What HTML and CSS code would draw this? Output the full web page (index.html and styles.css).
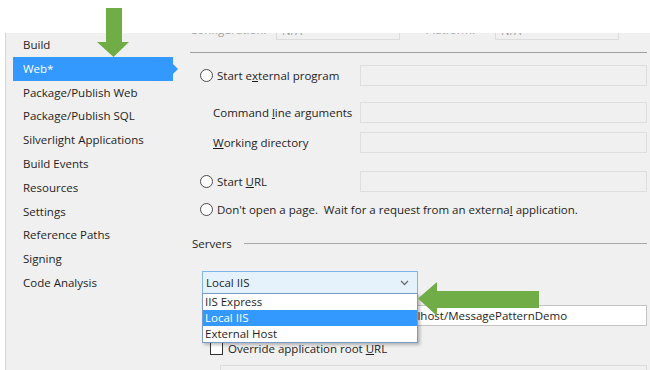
FILE: index.html
```html
<!DOCTYPE html>
<html lang="en">
<head>
    <meta charset="UTF-8">
    <title>Project Properties - Web</title>
    <link rel="stylesheet" href="styles.css">
</head>
<body>
    <div class="page">
        <div class="topbar"></div>
        <div class="window">
            <ul class="nav">
                <li>Build</li>
                <li class="active">Web*</li>
                <li>Package/Publish Web</li>
                <li>Package/Publish SQL</li>
                <li>Silverlight Applications</li>
                <li>Build Events</li>
                <li>Resources</li>
                <li>Settings</li>
                <li>Reference Paths</li>
                <li>Signing</li>
                <li>Code Analysis</li>
            </ul>

            <div class="content">
                <div class="config-row">
                    <span class="config-label">Configuration:</span>
                    <span class="config-box">N/A</span>
                    <span class="config-label platform">Platform:</span>
                    <span class="config-box">N/A</span>
                </div>
                <div class="sep"></div>

                <div class="row row-ext">
                    <label class="label radio-label"><span class="radio"></span><span>Start e<u>x</u>ternal program</span></label>
                    <span class="field"></span>
                </div>
                <div class="row row-args">
                    <label class="label sub"><span>Command <u>l</u>ine arguments</span></label>
                    <span class="field"></span>
                </div>
                <div class="row row-dir">
                    <label class="label sub"><span><u>W</u>orking directory</span></label>
                    <span class="field"></span>
                </div>
                <div class="row row-url">
                    <label class="label radio-label"><span class="radio"></span><span>Start <u>U</u>RL</span></label>
                    <span class="field"></span>
                </div>
                <div class="row row-none">
                    <label class="label radio-label wide"><span class="radio"></span><span>Don't open a page.&nbsp; Wait for a request from an externa<u>l</u> application.</span></label>
                </div>

                <div class="group-title">
                    <span>Servers</span>
                    <span class="group-line"></span>
                </div>

                <div class="server">
                    <div class="select">
                        <span>Local IIS</span>
                        <svg class="chevron" width="9" height="6" viewBox="0 0 9 6"><path d="M1 1l3.5 3.5L8 1" fill="none" stroke="#6d6d6d" stroke-width="1.3"/></svg>
                    </div>
                    <ul class="options">
                        <li>IIS Express</li>
                        <li class="selected">Local IIS</li>
                        <li>External Host</li>
                    </ul>
                </div>

                <div class="row row-project">
                    <label class="label sub"><span>Project Url</span></label>
                    <span class="field white">http://localhost/MessagePatternDemo</span>
                </div>

                <div class="check-row">
                    <span class="checkbox"></span>
                    <span>Override application root <u>U</u>RL</span>
                </div>

                <div class="bottom-box"></div>
            </div>
        </div>

        <svg class="arrow arrow-down" width="34" height="52" viewBox="0 0 34 52">
            <polygon points="10,1 26,1 26,35 33,35 17.5,50 1,35 10,35" fill="#70ad47"/>
        </svg>
        <svg class="arrow arrow-left" width="124" height="37" viewBox="0 0 124 37">
            <polygon points="1,17.5 20,1 20,10 122,10 122,27 20,27 20,35" fill="#70ad47"/>
        </svg>
    </div>
</body>
</html>
```

FILE: styles.css
```css
body {
    margin: 0;
    background: #ffffff;
    font-family: "Open Sans", "Noto Sans", sans-serif;
    font-size: 11.5px;
    color: #1e1e1e;
}
.page {
    position: relative;
    width: 650px;
    height: 370px;
    overflow: hidden;
}
.topbar {
    height: 33px;
    background: #ffffff;
}
.window {
    display: flex;
    height: 337px;
    margin-left: 5px;
    border-left: 1px solid #d6d6d6;
    background: #f0f0f0;
    overflow: hidden;
}
.nav {
    list-style: none;
    margin: 0;
    padding: 0;
    width: 175px;
    flex-shrink: 0;
}
.nav li {
    position: relative;
    height: 23.8px;
    line-height: 23.8px;
    margin-left: 7px;
    width: 160px;
    padding-left: 10px;
    box-sizing: border-box;
    white-space: nowrap;
}
.nav li.active {
    background: #3399ff;
    color: #ffffff;
}
.nav li.active::after {
    content: "";
    position: absolute;
    right: -5px;
    top: 7px;
    border-top: 5px solid transparent;
    border-bottom: 5px solid transparent;
    border-left: 5px solid #3399ff;
}
.content {
    flex: 1;
    padding: 0 3px 0 9px;
    min-width: 0;
}
.config-row {
    display: flex;
    align-items: center;
    height: 21px;
    margin-top: -14px;
    color: #a3a3a3;
}
.config-label {
    width: 86px;
}
.config-label.platform {
    width: 55px;
    margin-left: 20px;
    text-align: right;
    padding-right: 20px;
}
.config-box {
    width: 124px;
    height: 21px;
    line-height: 21px;
    padding-left: 5px;
    box-sizing: border-box;
    border: 1px solid #dcdcdc;
}
.sep {
    height: 1px;
    margin-top: 12px;
    background: #a0a0a0;
}
.row {
    display: flex;
    align-items: center;
    height: 21px;
}
.row-ext { margin-top: 12px; }
.row-args { margin-top: 16px; }
.row-dir { margin-top: 9px; }
.row-url { margin-top: 18px; }
.row-none { margin-top: 7px; }
.row-project { margin-top: 11px; }
.label {
    width: 170px;
    flex-shrink: 0;
    box-sizing: border-box;
    display: flex;
    align-items: center;
    white-space: nowrap;
}
.radio-label {
    padding-left: 10px;
}
.label.wide {
    width: auto;
}
.sub {
    padding-left: 23px;
}
.radio {
    width: 11px;
    height: 11px;
    border: 1px solid #4a4a4a;
    border-radius: 50%;
    background: #ffffff;
    margin-right: 4px;
}
.field {
    flex: 1;
    height: 21px;
    line-height: 19px;
    box-sizing: border-box;
    border: 1px solid #dedede;
    padding-left: 3px;
    white-space: nowrap;
}
.field.white {
    background: #ffffff;
    border-color: #c4c4c4;
    padding-left: 1px;
}
.group-title {
    display: flex;
    align-items: center;
    height: 16px;
    margin-top: 15px;
    padding-left: 2px;
}
.group-line {
    flex: 1;
    height: 1px;
    margin-left: 12px;
    background: #a8a8a8;
}
.server {
    position: relative;
    margin: 20px 0 0 12px;
    width: 216px;
}
.select {
    display: flex;
    align-items: center;
    justify-content: space-between;
    height: 23px;
    box-sizing: border-box;
    padding: 0 8px 0 3px;
    background: #e5f1fb;
    border: 1px solid #7eb4ea;
}
.options {
    position: absolute;
    top: 22px;
    left: 0;
    width: 216px;
    margin: 0;
    padding: 0;
    list-style: none;
    background: #ffffff;
    border: 1px solid #7a9cc8;
    box-sizing: border-box;
    box-shadow: 2px 2px 3px rgba(0,0,0,0.25);
    z-index: 2;
}
.options li {
    height: 16px;
    line-height: 16px;
    padding-left: 2px;
}
.options li.selected {
    background: #3399ff;
    color: #ffffff;
}
.check-row {
    display: flex;
    align-items: center;
    height: 16px;
    margin-top: 14px;
    padding-left: 20px;
}
.checkbox {
    width: 11px;
    height: 11px;
    border: 1px solid #333333;
    background: #ffffff;
    margin-right: 5px;
}
.bottom-box {
    height: 30px;
    margin: 9px 0 0 30px;
    border: 1px solid #dcdcdc;
}
.arrow {
    position: absolute;
    z-index: 3;
}
.arrow-down {
    left: 96px;
    top: 7px;
}
.arrow-left {
    left: 417px;
    top: 281px;
}
```
